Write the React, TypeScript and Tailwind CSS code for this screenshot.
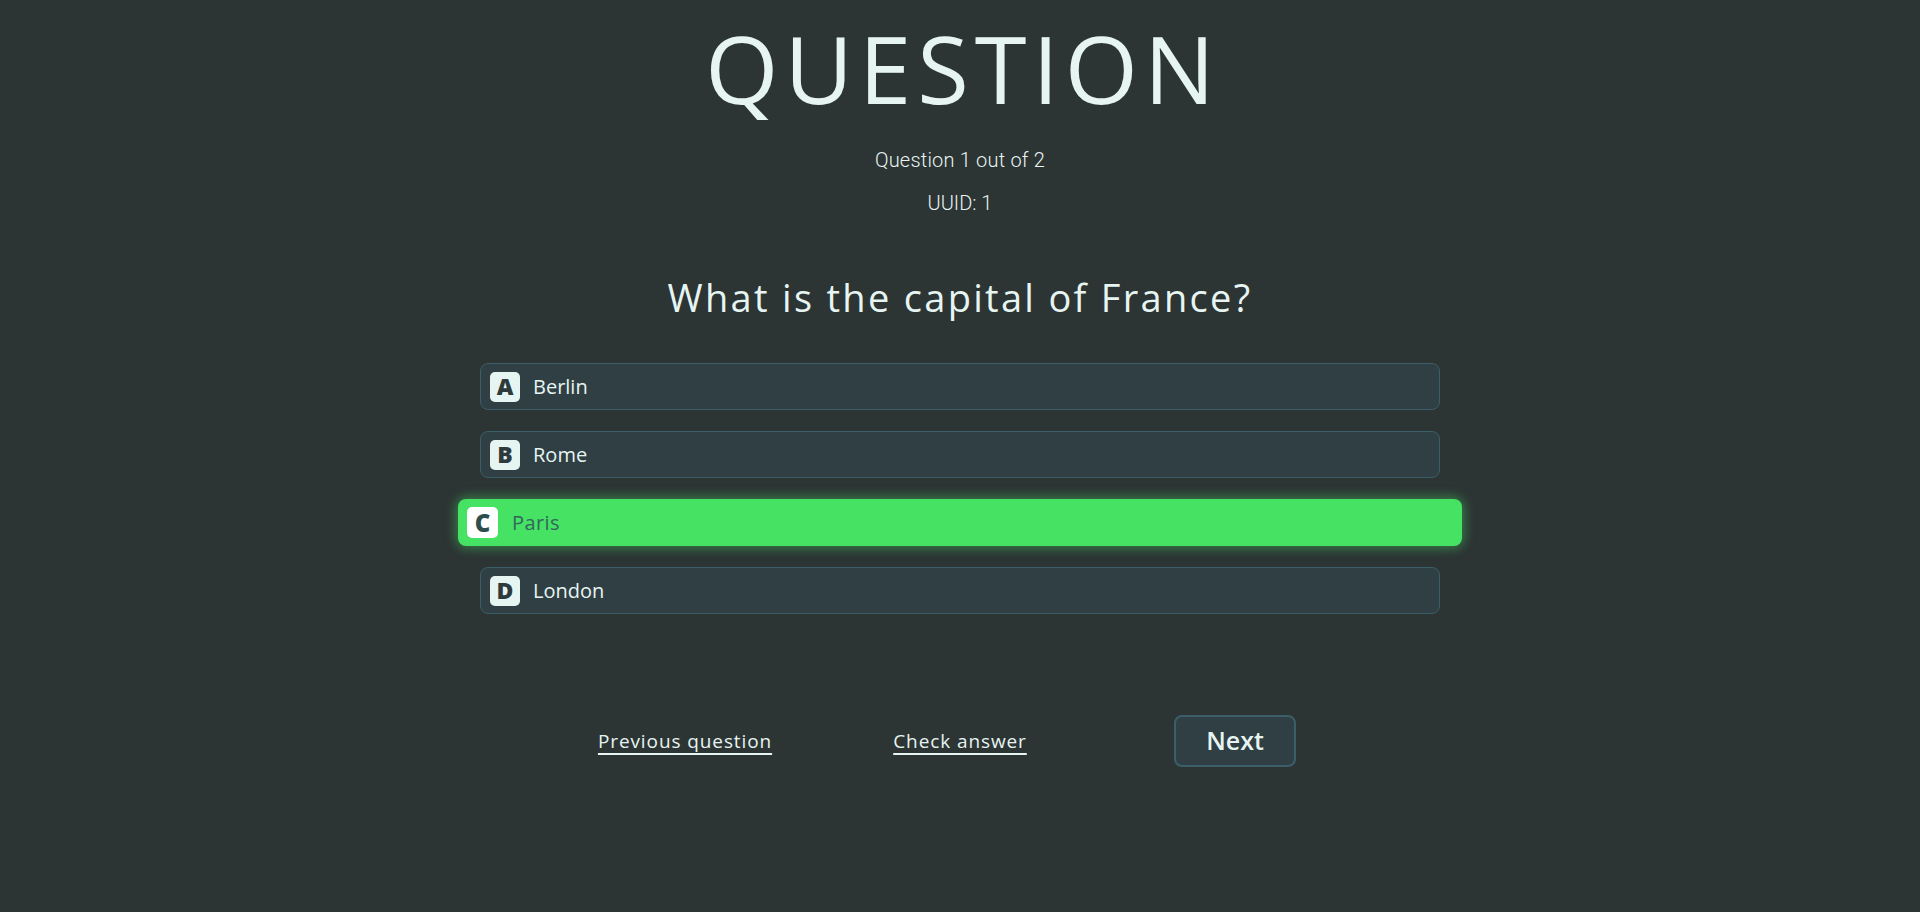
import React, { useState } from 'react';

const options = [
  { letter: 'A', text: 'Berlin' },
  { letter: 'B', text: 'Rome' },
  { letter: 'C', text: 'Paris' },
  { letter: 'D', text: 'London' },
];

const OptionRow = ({ letter, text, selected, onPick }: { letter: string; text: string; selected: boolean; onPick: () => void }) => {
  if (selected) {
    return (
      <button
        onClick={onPick}
        className="mx-[-22px] flex h-[47px] items-center gap-[14px] rounded-[8px] bg-[#46e263] pl-[9px] text-left shadow-[0_0_12px_2px_rgba(70,226,99,0.45)]"
      >
        <span className="flex h-[31px] w-[31px] items-center justify-center rounded-[5px] bg-white text-[24px] font-extrabold leading-none text-[#2f4d4c]">
          {letter}
        </span>
        <span className="text-[20px] font-normal tracking-[0.4px] text-[#32665c]">{text}</span>
      </button>
    );
  }
  return (
    <button
      onClick={onPick}
      className="flex h-[47px] items-center gap-[13px] rounded-[8px] border-[1.5px] border-[#3b5e69] bg-[#303f44] pl-[9px] text-left"
    >
      <span className="flex h-[30px] w-[30px] items-center justify-center rounded-[5px] bg-[#e6f5f2] text-[23px] font-extrabold leading-none text-[#2e3a3c]">
        {letter}
      </span>
      <span className="text-[20px] text-[#e6f5f2]">{text}</span>
    </button>
  );
};

export default function App() {
  const [picked, setPicked] = useState(2);

  return (
    <div className="flex min-h-screen flex-col items-center bg-[#2c3434] font-['Open_Sans',sans-serif] text-[#e6f5f2]">
      <h1 className="mt-[21px] pl-[6px] text-[94px] font-normal leading-[94px] tracking-[6px]">QUESTION</h1>
      <p className="mt-[33px] font-['Roboto',sans-serif] text-[20px] font-light leading-[24px] tracking-[0.2px]">Question 1 out of 2</p>
      <p className="mt-[19px] font-['Roboto',sans-serif] text-[20px] font-light leading-[24px]">UUID: 1</p>

      <h2 className="mt-[58px] text-[38px] font-normal leading-[48px] tracking-[2.3px]">What is the capital of France?</h2>

      <div className="mt-[42px] flex w-[960px] flex-col gap-[21px]">
        {options.map((o, i) => (
          <OptionRow key={o.letter} letter={o.letter} text={o.text} selected={picked === i} onPick={() => setPicked(i)} />
        ))}
      </div>

      <div className="mt-[101px] grid w-[825px] grid-cols-3 items-center justify-items-center">
        <a href="#" className="text-[19px] tracking-[0.9px] underline decoration-[1.5px] underline-offset-[5px]">Previous question</a>
        <a href="#" className="text-[19px] tracking-[0.9px] underline decoration-[1.5px] underline-offset-[5px]">Check answer</a>
        <button className="h-[52px] w-[122px] rounded-[8px] border-2 border-[#3b5e69] bg-[#303f44] text-[25px] font-semibold">
          Next
        </button>
      </div>
    </div>
  );
}
